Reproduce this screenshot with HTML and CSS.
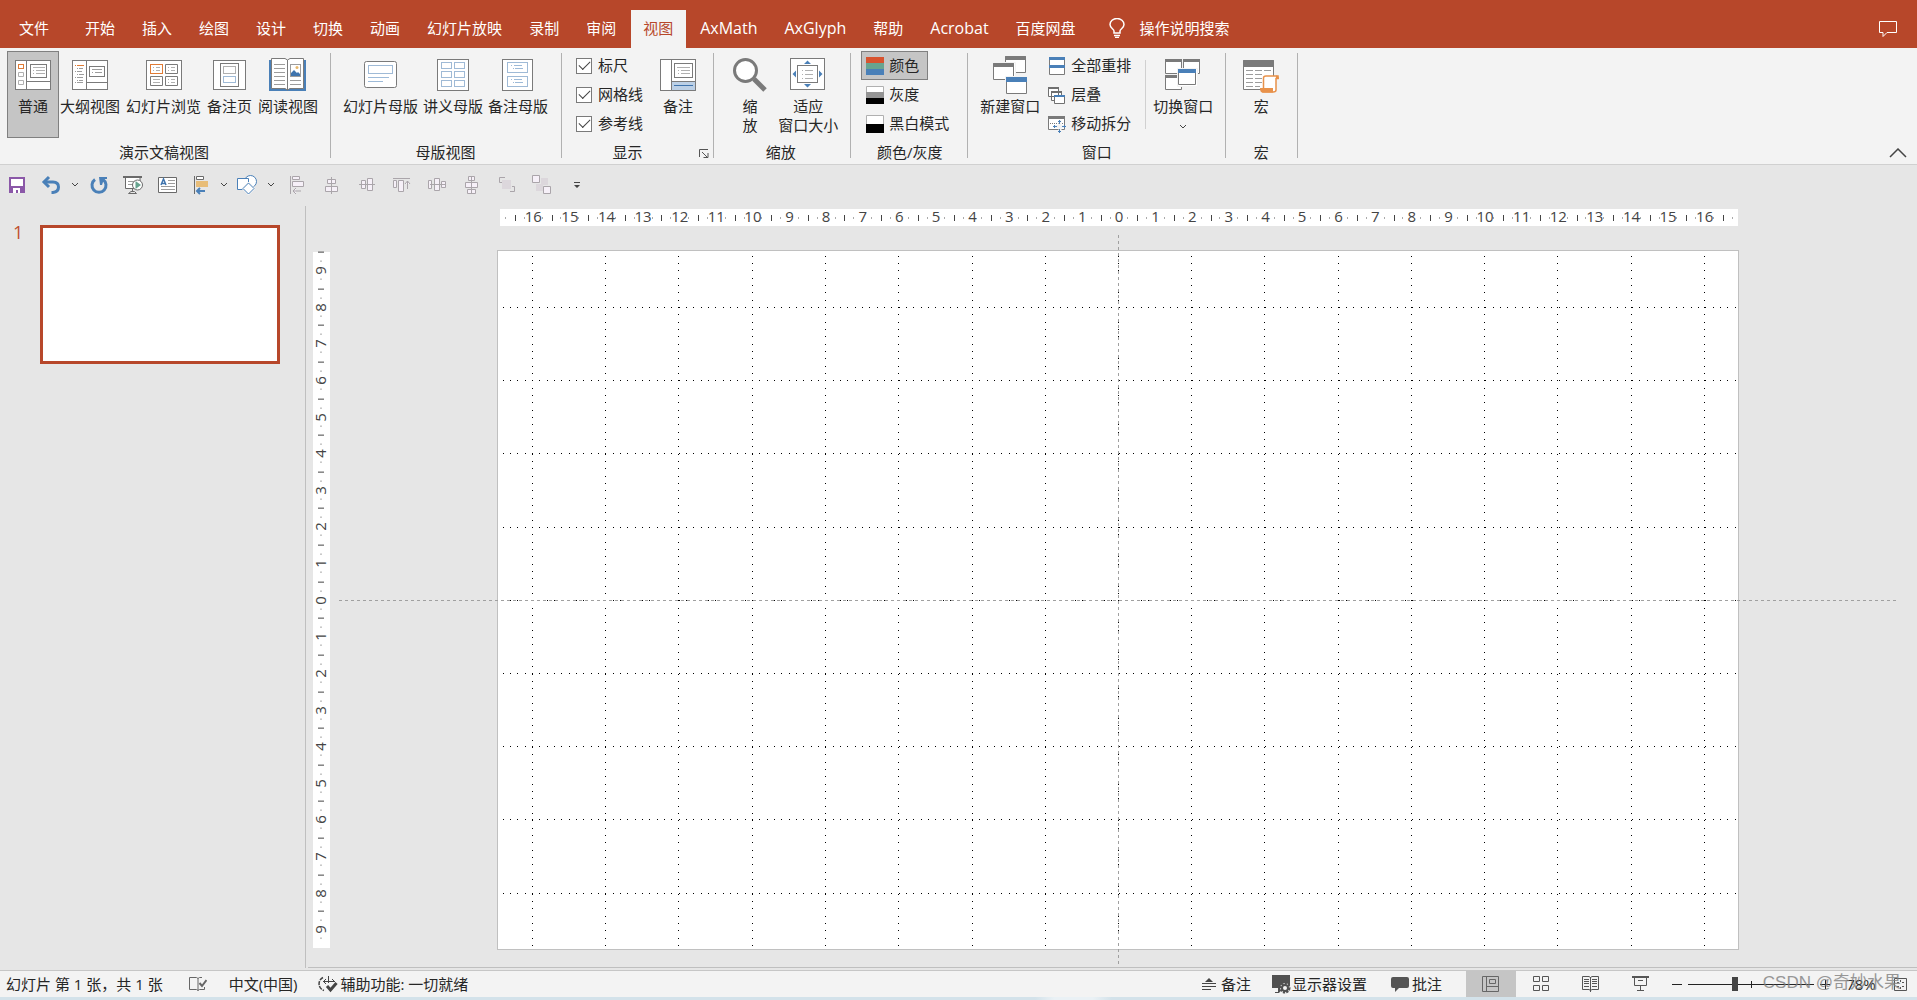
FILE: index.html
```html
<!DOCTYPE html>
<html lang="zh-CN">
<head>
<meta charset="utf-8">
<meta name="viewport" content="width=device-width, initial-scale=1">
<title>演示文稿</title>
<link rel="stylesheet" href="styles.css">
</head>
<body>
<header class="titlebar">
  <nav class="tabs" aria-label="功能区选项卡">
    <button class="tab tab-file">文件</button>
    <button class="tab">开始</button>
    <button class="tab">插入</button>
    <button class="tab">绘图</button>
    <button class="tab">设计</button>
    <button class="tab">切换</button>
    <button class="tab">动画</button>
    <button class="tab">幻灯片放映</button>
    <button class="tab">录制</button>
    <button class="tab">审阅</button>
    <button class="tab tab-active" aria-current="page">视图</button>
    <button class="tab tab-latin">AxMath</button>
    <button class="tab tab-latin">AxGlyph</button>
    <button class="tab">帮助</button>
    <button class="tab tab-latin">Acrobat</button>
    <button class="tab">百度网盘</button>
  </nav>
  <button class="tellme">
    <svg width="16" height="20" viewBox="0 0 16 20" fill="none" stroke="#fff" stroke-width="1.5"><path d="M5 15V13C5 11 1 10 1 6.500A7 6 0 0 1 15 6.500C15 10 11 11 11 13V15Z"/><path d="M5 17.500H11M6 19.500H10"/></svg>
    <span>操作说明搜索</span>
  </button>
  <button class="comments-btn" aria-label="批注">
    <svg width="18" height="18" viewBox="0 0 18 18" fill="none" stroke="#fff"><path d="M.5 1.500H17.500V12.500H8L4 16.500V12.500H.5Z"/></svg>
  </button>
</header>

<section class="ribbon" aria-label="视图">
  <div class="group group-views">
    <div class="group-body">
      <button class="big pressed">
        <svg width="36" height="42" viewBox="0 0 36 42" fill="#fff" stroke="#7a7a7a"><rect x=".5" y="6.500" width="35" height="29"/><path d="M11.500 6V36M11.500 27.500H36"/><rect x="15.500" y="10.500" width="16" height="13"/><rect x="3.500" y="10.500" width="5" height="4" stroke="#e07b35"/><path stroke="#b0b0b0" d="M3.500 18.500h5v4h-5zM3.500 26.500h5v4h-5zM18 13.500H30M18 16.500h1M21 16.500h9M18 19.500h1M21 19.500h9"/></svg>
        <span>普通</span>
      </button>
      <button class="big">
        <svg width="36" height="42" viewBox="0 0 36 42" fill="#fff" stroke="#7a7a7a"><rect x=".5" y="6.500" width="35" height="29"/><path d="M14.500 6V36M14.500 28.500H36"/><rect x="17.500" y="12.500" width="15" height="10"/><path stroke="#e07b35" d="M3 11.500h1M5 11.500h7"/><path stroke="#9c9c9c" d="M5 14.500h1M7 14.500h4M3 17.500h1M5 17.500h5M5 20.500h1M7 20.500h5M3 23.500h1M5 23.500h6M5 26.500h1M7 26.500h4M3 28.500h1M5 28.500h6M20 15.500h10M20 18.500h1M23 18.500h7"/></svg>
        <span>大纲视图</span>
      </button>
      <button class="big">
        <svg width="36" height="42" viewBox="0 0 36 42" fill="#fff" stroke="#7a7a7a"><rect x=".5" y="6.500" width="35" height="29"/><rect x="4.500" y="10.500" width="12" height="9" stroke="#e07b35"/><path d="M19.500 10.500h12v9h-12zM4.500 22.500h12v9h-12zM19.500 22.500h12v9h-12z"/><path stroke="#b0b0b0" d="M7 13.500h1M10 13.500h4M7 16.500h1M10 16.500h4M22 13.500h1M25 13.500h4M22 16.500h1M25 16.500h4M7 25.500h7M7 28.500h7M22 25.500h1M25 25.500h4M22 28.500h1M25 28.500h4"/></svg>
        <span>幻灯片浏览</span>
      </button>
      <button class="big">
        <svg width="36" height="42" viewBox="0 0 36 42" fill="#fff" stroke="#7a7a7a"><rect x="1.500" y="6.500" width="32" height="29"/><rect x="8.500" y="9.500" width="18" height="23"/><rect x="11.500" y="12.500" width="12" height="7" stroke="#b0b0b0"/><rect x="11.500" y="22.500" width="12" height="6" stroke="#3f74ad" stroke-dasharray="1 1"/></svg>
        <span>备注页</span>
      </button>
      <button class="big">
        <svg width="38" height="42" viewBox="0 0 38 42"><path fill="#4a80b8" d="M0 6H37V37H0Z"/><path fill="#fff" stroke="#7a7a7a" d="M2.500 4.500H16L18.500 6L21 4.500H34.500V34.500H21L18.500 36L16 34.500H2.500ZM18.500 6V36"/><path stroke="#9c9c9c" d="M5 10.500H16M5 14.500H16M5 18.500H16M5 22.500H16M5 26.500H16M5 30.500H16M21 26.500H32M21 30.500H32"/><rect x="21.500" y="10.500" width="10" height="12" fill="#fff" stroke="#9c9c9c"/><circle cx="28" cy="13.500" r="1.500" fill="#e8b86a"/><path fill="#3f74ad" d="M22 22V19L25 16L28 19L29 18L31 20V22Z"/></svg>
        <span>阅读视图</span>
      </button>
    </div>
    <div class="group-label">演示文稿视图</div>
  </div>

  <div class="group group-master">
    <div class="group-body">
      <button class="big">
        <svg width="36" height="42" viewBox="0 0 36 42" fill="#fff" stroke="#7a7a7a"><rect x="1.500" y="7.500" width="32" height="26" rx="2"/><rect x="5.500" y="11.500" width="24" height="8" stroke="#3f74ad" stroke-dasharray="1 1"/><path stroke="#9dbad8" d="M5 23.500H26M5 27.500H20"/></svg>
        <span>幻灯片母版</span>
      </button>
      <button class="big">
        <svg width="36" height="42" viewBox="0 0 36 42" fill="#fff" stroke="#7a7a7a"><rect x="2.500" y="5.500" width="31" height="31"/><path stroke="#3f74ad" stroke-dasharray="1 1" d="M6.500 8.500h10v6h-10zM19.500 8.500h10v6h-10zM6.500 17.500h10v6h-10zM19.500 17.500h10v6h-10zM6.500 26.500h10v6h-10zM19.500 26.500h10v6h-10z"/></svg>
        <span>讲义母版</span>
      </button>
      <button class="big">
        <svg width="36" height="42" viewBox="0 0 36 42" fill="#fff" stroke="#7a7a7a"><rect x="2.500" y="5.500" width="30" height="31"/><path stroke="#3f74ad" stroke-dasharray="1 1" d="M7.500 8.500h20v10h-20zM7.500 22.500h20v10h-20z"/><path stroke="#9dbad8" d="M11 11.500h1M14 11.500h8M13 14.500h1M15 14.500h8M11 25.500h1M14 25.500h8M13 28.500h1M15 28.500h8"/></svg>
        <span>备注母版</span>
      </button>
    </div>
    <div class="group-label">母版视图</div>
  </div>

  <div class="group group-show">
    <div class="group-body">
      <div class="stack">
        <label class="check"><input type="checkbox" checked>标尺</label>
        <label class="check"><input type="checkbox" checked>网格线</label>
        <label class="check"><input type="checkbox" checked>参考线</label>
      </div>
      <button class="big">
        <svg width="36" height="42" viewBox="0 0 36 42" fill="#fff" stroke="#7a7a7a"><rect x=".5" y="5.500" width="35" height="31"/><path fill="#bcd0e6" d="M11.500 27.500H35.500V36.500H11.500Z"/><path d="M11.500 5V36"/><rect x="14.500" y="9.500" width="18" height="14"/><path stroke="#3f74ad" d="M14 31.500H33"/><path stroke="#b0b0b0" d="M17 13.500H30M18 16.500h1M21 16.500h9M18 19.500h1M21 19.500h9"/></svg>
        <span>备注</span>
      </button>
    </div>
    <div class="group-label">显示
      <button class="launcher" aria-label="网格设置"><svg width="10" height="10" viewBox="0 0 10 10" fill="none" stroke="#555"><path d="M.5 8V.5H9M3 3L8.500 8.500M9 4V8.500H4.500"/></svg></button>
    </div>
  </div>

  <div class="group group-zoom">
    <div class="group-body">
      <button class="big">
        <svg width="34" height="42" viewBox="0 0 34 42"><circle cx="12.500" cy="16.500" r="11" fill="#fff" stroke="#7a7a7a" stroke-width="3"/><path d="M21 25L32 36" stroke="#7a7a7a" stroke-width="5"/></svg>
        <span>缩<br>放</span>
      </button>
      <button class="big">
        <svg width="36" height="42" viewBox="0 0 36 42" fill="#fff" stroke="#7a7a7a"><rect x=".5" y="4.500" width="34" height="31"/><rect x="7.500" y="11.500" width="20" height="17"/><path stroke="#b0b0b0" d="M12 16.500h1M15 16.500h8M12 20.500h1M15 20.500h8M12 24.500h1M15 24.500h8"/><path fill="#4a80b8" stroke="none" d="M14 10L17.500 6.500L21 10ZM14 30L17.500 33.500L21 30ZM6 16.500L2.500 20L6 23.500ZM29 16.500L32.500 20L29 23.500Z"/></svg>
        <span>适应<br>窗口大小</span>
      </button>
    </div>
    <div class="group-label">缩放</div>
  </div>

  <div class="group group-color">
    <div class="group-body">
      <div class="stack">
        <button class="small pressed"><svg width="18" height="18" viewBox="0 0 18 18"><path fill="#d8532f" d="M0 0h18v6H0z"/><path fill="#68a490" d="M0 6h18v6H0z"/><path fill="#4a80b8" d="M0 12h18v6H0z"/></svg>颜色</button>
        <button class="small"><svg width="18" height="18" viewBox="0 0 18 18"><path fill="#fff" stroke="#b0b0b0" d="M.5.5h17v17H.5z"/><path fill="#949494" d="M0 6h18v6H0z"/><path d="M0 12h18v6H0z"/></svg>灰度</button>
        <button class="small"><svg width="18" height="18" viewBox="0 0 18 18"><path fill="#fff" stroke="#b0b0b0" d="M.5.5h17v17H.5z"/><path d="M0 9h18v9H0z"/></svg>黑白模式</button>
      </div>
    </div>
    <div class="group-label">颜色/灰度</div>
  </div>

  <div class="group group-window">
    <div class="group-body">
      <button class="big">
        <svg width="36" height="42" viewBox="0 0 36 42" fill="#fff" stroke="#7a7a7a"><path d="M13.500 2.500h20v16h-20z"/><path fill="#7a7a7a" d="M13.500 2.500h20v3h-20z"/><path stroke="#f3f3f3" d="M.5 8.500h23v18H.5z"/><path d="M1.500 9.500h20v16h-20z"/><path fill="#7a7a7a" d="M1.500 9.500h20v3h-20z"/><path stroke="#f3f3f3" d="M13.500 22.500h22v18h-22z"/><path d="M14.500 23.500h20v16h-20z"/><path fill="#4a80b8" stroke="none" d="M14 23h21v5H14z"/></svg>
        <span>新建窗口</span>
      </button>
      <div class="stack">
        <button class="small"><svg width="18" height="20" viewBox="0 0 18 20" fill="#fff" stroke="#7a7a7a"><path d="M1.500 1.500h15v17h-15z"/><path fill="#4a80b8" stroke="none" d="M1 1h16v3H1zM1 9h16v3H1z"/></svg>全部重排</button>
        <button class="small"><svg width="18" height="18" viewBox="0 0 18 18" fill="#fff" stroke="#707070"><path d="M.5 1.500h10v9H.5zM3.500 5.500h10v9h-10z"/><path stroke-width="2" d="M0 2h11M3 6h11"/><path d="M6.500 9.500h10v8h-10z"/><path stroke="#4a80b8" stroke-width="2" d="M6 10h11"/></svg>层叠</button>
        <button class="small"><svg width="18" height="18" viewBox="0 0 18 18" fill="#fff" stroke="#7a7a7a"><path d="M.5 1.500h16v13H.5z"/><path stroke-width="3" d="M0 2.500h17"/><path stroke-dasharray="1 1" d="M2 8.500h14"/><path stroke="#f3f3f3" stroke-width="3" d="M12 5v13M6 11.500h12"/><path stroke="#4a80b8" d="M11.500 5v4M11.500 14v4M10 6.500h3M10 16.500h3M5 11.500h4M14 11.500h4M6.500 10v3M16.500 10v3"/></svg>移动拆分</button>
      </div>
      <div class="inner-rule"></div>
      <button class="big">
        <svg width="36" height="42" viewBox="0 0 36 42" fill="#fff" stroke="#7a7a7a"><path d="M.5 5.500h16v14H.5zM18.500 5.500h16v14h-16zM.5 21.500h16v14H.5z"/><path stroke-width="3" d="M0 6.500h17M18 6.500h17M0 22.500h17"/><path stroke="#f3f3f3" d="M12.500 14.500h20v18h-20z"/><path d="M13.500 15.500h17v15h-17z"/><path fill="#4a80b8" stroke="none" d="M13 15h18v4H13z"/></svg>
        <span>切换窗口</span>
        <svg class="drop" width="8" height="19" viewBox="0 0 8 19" fill="none" stroke="#444"><path d="M1 8L4 11L7 8"/></svg>
      </button>
    </div>
    <div class="group-label">窗口</div>
  </div>

  <div class="group group-macro">
    <div class="group-body">
      <button class="big">
        <svg width="36" height="42" viewBox="0 0 36 42" fill="#fff" stroke="#7a7a7a"><path d="M.5 6.500h30v29H.5z"/><path fill="#7a7a7a" d="M.5 6.500h30v6H.5z"/><path stroke="#9c9c9c" d="M3 16.500h7M12 16.500h7M21 16.500h7M3 20.500h7M12 20.500h7M3 24.500h7M12 24.500h7M3 28.500h7M12 28.500h7M3 32.500h7M12 32.500h5"/><path stroke="#e8914a" stroke-width="1.500" d="M20.500 35V24Q20.500 22 23 22H35V24.500H33V36Q33 38 30 38H20Z"/><path fill="#e8914a" stroke="none" d="M17 34H30V38.500H19Q17 38 17 34ZM33 21.500Q36 21.500 36 25H33Z"/></svg>
        <span>宏</span>
      </button>
    </div>
    <div class="group-label">宏</div>
  </div>
  <button class="collapse" aria-label="折叠功能区"><svg width="18" height="10" viewBox="0 0 18 10" fill="none" stroke="#444" stroke-width="1.500"><path d="M1 9L9 1L17 9"/></svg></button>
</section>

<div class="quickbar" role="toolbar" aria-label="快速访问工具栏">
  <button class="qa" aria-label="保存"><svg width="20" height="20" viewBox="0 0 20 20"><path fill="#8b58a8" d="M2 2H18V18H2Z"/><path fill="#fff" d="M4 4H16V11H4ZM6 13H13V18H11V15H9V18H6Z"/></svg></button>
  <button class="qa" aria-label="撤消"><svg width="20" height="20" viewBox="0 0 20 20" fill="none" stroke="#4a80b8" stroke-width="3"><path d="M3 7H12Q17.500 7 17.500 12T12 17.500H10.500"/><path d="M8 2L3 7L8 12"/></svg></button>
  <button class="qa-drop" aria-label="撤消选项"><svg width="8" height="6" viewBox="0 0 8 6" fill="none" stroke="#444"><path d="M1 1L4 4L7 1"/></svg></button>
  <button class="qa" aria-label="重复"><svg width="20" height="20" viewBox="0 0 20 20" fill="none" stroke="#4a80b8" stroke-width="3"><path d="M6 4.500A7 7 0 1 0 14 4.500"/><path fill="#4a80b8" stroke="none" d="M10 2H18V4H15L13 10H11Z"/></svg></button>
  <button class="qa" aria-label="从头开始"><svg width="20" height="20" viewBox="0 0 20 20" fill="none" stroke="#6a6a6a"><path stroke-width="2" d="M0 2H19"/><path fill="#fff" d="M2.500 3V13.500H17V3"/><path stroke="#9c9c9c" d="M5 6.500H12M5 9.500H10"/><path d="M9.500 14V17M5.500 18.500L8 16.500H11.500L13.500 18.500Z"/><circle cx="14.500" cy="10" r="5" fill="#fff"/><path fill="#68a490" stroke="none" d="M12.500 6V14L18 10Z"/></svg></button>
  <button class="qa" aria-label="文本框"><svg width="20" height="20" viewBox="0 0 20 20" fill="#fff" stroke="#6a6a6a"><path d="M1.500 2.500H19.500V17.500H1.500Z"/><path stroke="#9c9c9c" d="M11 5.500H18M11 8.500H18M4 11.500H18M4 14.500H18"/><path fill="none" stroke="#3f74ad" stroke-width="1.500" d="M4 10L6.500 4L9 10M5 8.500H8"/></svg></button>
  <button class="qa" aria-label="对齐"><svg width="20" height="20" viewBox="0 0 20 20" fill="#fff" stroke="#6a6a6a"><path d="M3.500 1V19M5.500 1.500h7v3h-7z"/><path fill="#e8bd78" stroke="none" d="M5 6H17V12H5Z"/><path fill="none" stroke="#4a80b8" stroke-width="2" d="M6 16H14M9 13L6 16L9 19"/></svg></button>
  <button class="qa-drop short" aria-label="对齐选项"><svg width="8" height="6" viewBox="0 0 8 6" fill="none" stroke="#444"><path d="M1 1L4 4L7 1"/></svg></button>
  <button class="qa" aria-label="形状"><svg width="22" height="20" viewBox="0 0 22 20" fill="#fff" stroke="#4a80b8"><circle cx="14.500" cy="6.500" r="6"/><path d="M1.500 3.500h11v11h-11z"/><path stroke="#f3f3f3" d="M12.500 7L19 13.500L12.500 20L6 13.500Z"/><path d="M12.500 8L18 13.500L12.500 19L7 13.500Z"/></svg></button>
  <button class="qa-drop" aria-label="形状选项"><svg width="8" height="6" viewBox="0 0 8 6" fill="none" stroke="#444"><path d="M1 1L4 4L7 1"/></svg></button>
  <div class="qa-disabled">
    <button class="qa" disabled aria-label="左对齐"><svg width="20" height="20" viewBox="0 0 20 20" fill="#f6f0f8" stroke="#aaa5aa"><path d="M3.500 1V19M5.500 1.500h7v3h-7zM5.500 6.500h11v5h-11zM6 16H14M9 13L6 16L9 19"/></svg></button>
    <button class="qa" disabled aria-label="水平居中"><svg width="20" height="20" viewBox="0 0 20 20" fill="#f6f0f8" stroke="#aaa5aa"><path d="M9.500 2V19M5.500 4.500h8v4h-8zM3.500 11.500h12v5h-12z"/></svg></button>
    <button class="qa" disabled aria-label="垂直居中"><svg width="20" height="20" viewBox="0 0 20 20" fill="#f6f0f8" stroke="#aaa5aa"><path d="M2 9.500H18M4.500 5.500h4v8h-4zM10.500 3.500h5v12h-5z"/></svg></button>
    <button class="qa" disabled aria-label="顶端对齐"><svg width="20" height="20" viewBox="0 0 20 20" fill="#f6f0f8" stroke="#aaa5aa"><path d="M1 3.500H18M1.500 5.500h3v7h-3zM6.500 5.500h5v11h-5zM15.500 14V6M13 9L15.500 6L18 9"/></svg></button>
    <button class="qa" disabled aria-label="横向分布"><svg width="20" height="20" viewBox="0 0 20 20" fill="#f6f0f8" stroke="#aaa5aa"><path d="M3 9.500H18M1.500 5.500h3v8h-3zM7.500 3.500h5v12h-5zM14.500 6.500h4v6h-4z"/></svg></button>
    <button class="qa" disabled aria-label="纵向分布"><svg width="20" height="20" viewBox="0 0 20 20" fill="#f6f0f8" stroke="#aaa5aa"><path d="M9.500 2V18M6.500 1.500h6v4h-6zM3.500 7.500h12v5h-12zM5.500 14.500h8v4h-8z"/></svg></button>
    <button class="qa" disabled aria-label="置于顶层"><svg width="20" height="20" viewBox="0 0 20 20" fill="none" stroke="#aaa5aa"><path d="M8 2.500H2.500V7.500H5M13 16.500H17.500V11.500H15"/><path fill="#dcd7dc" stroke="none" d="M5 5H14V14H5Z"/></svg></button>
    <button class="qa" disabled aria-label="组合"><svg width="20" height="20" viewBox="0 0 20 20" fill="#f6f0f8" stroke="#aaa5aa"><path fill="#dcd7dc" stroke="none" d="M9 3H16V10H9ZM4 9H11V16H4Z"/><path d="M.5.500h7v7h-7zM11.500 11.500h7v7h-7z"/></svg></button>
    <button class="qa" aria-label="自定义快速访问工具栏"><svg width="8" height="8" viewBox="0 0 8 8"><path fill="#444" d="M1 1H7V2H1ZM1 4H7L4 7Z"/></svg></button>
  </div>
</div>

<main class="workspace">
  <aside class="slides" aria-label="幻灯片缩略图">
    <span class="slide-no">1</span>
    <button class="thumb" aria-label="幻灯片 1"></button>
  </aside>
  <section class="stage">
    <div class="ruler ruler-h" aria-hidden="true"><i class="lead"></i><span>16</span><span>15</span><span>14</span><span>13</span><span>12</span><span>11</span><span>10</span><span>9</span><span>8</span><span>7</span><span>6</span><span>5</span><span>4</span><span>3</span><span>2</span><span>1</span><span>0</span><span>1</span><span>2</span><span>3</span><span>4</span><span>5</span><span>6</span><span>7</span><span>8</span><span>9</span><span>10</span><span>11</span><span>12</span><span>13</span><span>14</span><span>15</span><span>16</span><i class="trail"></i></div>
    <div class="ruler ruler-v" aria-hidden="true"><span>9</span><span>8</span><span>7</span><span>6</span><span>5</span><span>4</span><span>3</span><span>2</span><span>1</span><span>0</span><span>1</span><span>2</span><span>3</span><span>4</span><span>5</span><span>6</span><span>7</span><span>8</span><span>9</span></div>
    <div class="slide">
      <svg class="gridlines" viewBox="0 0 1240 698" preserveAspectRatio="none" fill="none" stroke="#000" stroke-dasharray="1 6 1 6 1 7" shape-rendering="crispEdges">
        <path d="M34.500 5V698M107.500 5V698M180.500 5V698M254.500 5V698M327.500 5V698M400.500 5V698M474.500 5V698M547.500 5V698M620.500 5V698M693.500 5V698M766.500 5V698M840.500 5V698M913.500 5V698M986.500 5V698M1059.500 5V698M1133.500 5V698M1206.500 5V698"/>
        <path d="M5 56.500H1240M5 129.500H1240M5 202.500H1240M5 276.500H1240M5 349.500H1240M5 422.500H1240M5 495.500H1240M5 568.500H1240M5 642.500H1240"/>
      </svg>
      <div class="guide guide-h"></div>
      <div class="guide guide-v"></div>
    </div>
  </section>
</main>

<footer class="status">
  <span>幻灯片 第 1 张，共 1 张</span>
  <button class="st st-proof" aria-label="拼写检查"><svg width="18" height="16" viewBox="0 0 18 16" fill="none" stroke="#666"><path d="M9 14.500V2.500L7.500 1.500H.5V13.500H7.500L9 14.500L10.500 13.500H15.500V11M9 2.500L10.500 1.500H13"/><path stroke-width="2" d="M10.500 7L13 10L17.500 4"/></svg></button>
  <button class="st st-lang">中文(中国)</button>
  <button class="st st-a11y"><svg width="20" height="18" viewBox="0 0 20 18" fill="none" stroke="#444"><path stroke-width="1.500" d="M5 2.500A7 7 0 0 0 6 15.500" stroke-dasharray="4 1"/><path d="M5 6.500H17M8 4L5.500 6.500L8 9M10.500 1V8M14 4L16.500 6.500"/><path stroke-width="3" d="M9 11L12.500 15L18.500 8"/></svg>辅助功能: 一切就绪</button>
  <div class="status-right">
    <button class="st st-notes"><svg width="14" height="14" viewBox="0 0 14 14" fill="#444"><path d="M3 5L7 1L11 5ZM0 6H14V7H0ZM0 9H14V10H0ZM0 12H9V13H0Z"/></svg>备注</button>
    <button class="st st-display"><svg width="20" height="20" viewBox="0 0 20 20"><path fill="#505050" d="M1 1H19V14H12L8 19H4V18H7V14H1Z"/><circle cx="14" cy="14" r="5" fill="#f3f3f3"/><circle cx="14" cy="14" r="4" fill="none" stroke="#505050" stroke-width="3" stroke-dasharray="2 1"/><circle cx="14" cy="14" r="3" fill="#f3f3f3" stroke="#505050" stroke-width="2"/></svg>显示器设置</button>
    <button class="st st-comment"><svg width="18" height="18" viewBox="0 0 18 18"><path fill="#555" d="M2 2H16Q18 2 18 4V11Q18 13 16 13H8L4 17V13H2Q0 13 0 11V4Q0 2 2 2Z"/></svg>批注</button>
    <button class="view view-on" aria-label="普通视图"><svg width="18" height="18" viewBox="0 0 18 18" fill="none" stroke="#666"><path d="M.5 1.500h16v15H.5zM4.500 1V16M4.500 11.500H17M7.500 4.500h6v4h-6z"/></svg></button>
    <button class="view" aria-label="幻灯片浏览"><svg width="18" height="18" viewBox="0 0 18 18" fill="none" stroke="#555"><path d="M1.500 1.500h6v5h-6zM10.500 1.500h6v5h-6zM1.500 10.500h6v5h-6zM10.500 10.500h6v5h-6z"/></svg></button>
    <button class="view" aria-label="阅读视图"><svg width="18" height="18" viewBox="0 0 18 18" fill="none" stroke="#555"><path d="M.5 1.500H7L8.500 2.500L10 1.500H16.500V14.500H10L8.500 15.500L7 14.500H.5ZM8.500 2V17M2 4.500h5M2 6.500h5M2 8.500h5M2 11.500h5M10 4.500h5M10 6.500h5M10 8.500h5M10 11.500h5"/></svg></button>
    <button class="view" aria-label="幻灯片放映"><svg width="18" height="18" viewBox="0 0 18 18" fill="none" stroke="#555"><path stroke-width="2" d="M0 2H17"/><path d="M2.500 2V10.500H14.500V2M6 5.500H11M8.500 11V15.500M5 15.500H12"/></svg></button>
    <button class="zoom-step" aria-label="缩小"><svg width="10" height="10" viewBox="0 0 10 10" stroke="#222"><path d="M0 5.500H10"/></svg></button>
    <input class="zoom-range" type="range" min="10" max="400" value="154" aria-label="缩放级别">
    <button class="zoom-step" aria-label="放大"><svg width="10" height="10" viewBox="0 0 10 10" stroke="#222"><path d="M0 5.500H10M5.500 1V10"/></svg></button>
    <button class="zoom-value">78%</button>
    <button class="fit" aria-label="适应窗口"><svg width="14" height="14" viewBox="0 0 14 14" fill="none" stroke="#555"><path d="M.5 1.500h12v12H.5zM5 5.500H3M8 5.500H10M5 9.500H3M8 9.500H10M6.500 5V3M6.500 10V12"/></svg></button>
  </div>
  <span class="watermark">CSDN @奇妙水果</span>
</footer>
<div class="taskbar-edge"></div>
</body>
</html>
```
FILE: styles.css
```css
* { box-sizing: border-box; }

body {
  margin: 0;
  height: 100vh;
  display: flex;
  flex-direction: column;
  overflow: hidden;
  background: #e6e6e6;
  color: #262626;
  font: 15px/19px "Open Sans", "Noto Sans CJK SC", sans-serif;
}

button {
  margin: 0;
  padding: 0;
  border: 0;
  background: none;
  color: inherit;
  font: inherit;
  white-space: nowrap;
}

svg { display: block; flex: none; }

/* Title bar */
.titlebar {
  flex: none;
  display: flex;
  align-items: flex-end;
  height: 48px;
  background: #b7472a;
  color: #fff;
}
.tabs { display: flex; gap: 2px; }
.tab { height: 38px; padding: 0 13px 2px 12px; }
.tab-latin { font-size: 16px; }
.tab-file { margin: 0 9px 0 7px; }
.tab-active { background: #f3f3f3; color: #b7472a; }
.tellme {
  display: flex;
  align-items: center;
  gap: 15px;
  height: 38px;
  margin-left: 20px;
  padding-bottom: 2px;
}
.comments-btn { height: 38px; margin: 0 20px 0 auto; }

/* Ribbon */
.ribbon {
  flex: none;
  display: flex;
  height: 117px;
  padding-top: 3px;
  background: #f3f3f3;
  border-bottom: 1px solid #d0d0d0;
}
.group {
  display: flex;
  flex-direction: column;
  background: linear-gradient(#b1b1b1, #b1b1b1) right 2px / 1px 105px no-repeat;
}
.group-views { padding: 0 10px 0 7px; }
.group-master { padding: 0 12px 0 10px; }
.group-show { padding: 0 15px 0 14px; }
.group-zoom { padding: 0 10px 0 16px; }
.group-color { padding: 0 10px; }
.group-window { padding: 0 10px 0 9px; }
.group-macro { padding: 0 16px 0 14px; }
.group-body { display: flex; height: 87px; }
.group-label { position: relative; padding-top: 5px; text-align: center; }
.group-show .group-label { padding-right: 20px; }
.group-zoom .group-label { padding-right: 10px; }
.group-show .big { margin-left: 14px; }
.group-zoom .group-body { gap: 5px; }
.launcher { position: absolute; right: -10px; bottom: 3px; }

.big {
  display: flex;
  flex-direction: column;
  align-items: center;
  gap: 1px;
  padding: 2px;
  border: 1px solid transparent;
}
.big.pressed { width: 52px; margin-right: -2px; }
.group-master .big { padding: 2px 1px; }
.pressed { background: #c5c5c5; border-color: #808080; }
.group-master .group-body { gap: 1px; }
.stack { display: grid; grid-template-rows: repeat(3, 29px); justify-items: start; }
.small {
  display: flex;
  align-items: center;
  gap: 5px;
  padding: 0 8px 0 4px;
  border: 1px solid transparent;
}
.small.pressed { border-color: #808080; }
.check { display: flex; align-items: center; gap: 6px; }
.check input {
  appearance: none;
  width: 16px;
  height: 16px;
  margin: 0;
  border: 1px solid #7a7a7a;
  background: #fff;
  display: grid;
  place-items: center;
}
.check input:checked::before {
  content: "";
  width: 10px;
  height: 5px;
  margin-bottom: 3px;
  border: solid #444;
  border-width: 0 0 1px 1px;
  rotate: -45deg;
}
.inner-rule { width: 1px; height: 69px; margin: 9px 4px 0 5px; background: #d0d0d0; }
.collapse { align-self: flex-end; margin: 0 10px 6px auto; }

/* Quick access toolbar */
.quickbar { flex: none; display: flex; align-items: center; height: 41px; padding-bottom: 2px; }
.qa, .qa-drop { display: grid; place-items: center; height: 30px; }
.qa { width: 34px; }
.qa-drop { width: 14px; }
.qa-drop.short { width: 12px; }
.qa-disabled { display: flex; margin-left: 1px; }
.qa-disabled .qa { width: 35px; }

/* Workspace */
.workspace { flex: 1; min-height: 0; display: flex; }
.slides {
  flex: none;
  display: flex;
  align-items: flex-start;
  width: 306px;
  margin-bottom: 2px;
  padding: 19px 0 0 13px;
  border-right: 1px solid #bfbfbf;
}
.slide-no { width: 27px; color: #c0502f; font-size: 18px; line-height: 15px; }
.thumb { width: 240px; height: 139px; border: 3px solid #b7472a; background: #fff; }

.stage {
  flex: 1;
  min-width: 0;
  display: grid;
  grid-template: 17px minmax(0, 1fr) / 17px minmax(0, 1fr);
  gap: 24px 167px;
  margin: 0 0 2px 2px;
  padding: 3px 178px 17px 5px;
  border-bottom: 1px solid #bfbfbf;
}
.ruler {
  display: grid;
  background: #fff;
  color: #444;
  line-height: 15px;
  text-align: center;
}
.ruler-h {
  grid-column: 2;
  grid-template-columns: 15px repeat(33, minmax(0, 1fr)) 15px;
  margin-left: 3px;
  margin-right: 1px;
}
.ruler-h span {
  background:
    linear-gradient(#444, #444) left center / 1px 6px no-repeat,
    linear-gradient(#aaa, #aaa) 25% center / 1px 2px no-repeat,
    linear-gradient(#aaa, #aaa) 75% center / 1px 2px no-repeat;
}
.lead { background: linear-gradient(#aaa, #aaa) 35% center / 1px 2px no-repeat; }
.trail {
  background:
    linear-gradient(#444, #444) left center / 1px 6px no-repeat,
    linear-gradient(#aaa, #aaa) 65% center / 1px 2px no-repeat;
}
.ruler-v {
  grid-template-rows: repeat(19, minmax(0, 1fr));
  margin: 2px 0;
}
.ruler-v span {
  writing-mode: vertical-rl;
  rotate: 180deg;
  background:
    linear-gradient(#444, #444) center bottom / 6px 1px no-repeat,
    linear-gradient(#aaa, #aaa) center 25% / 2px 1px no-repeat,
    linear-gradient(#aaa, #aaa) center 75% / 2px 1px no-repeat;
}
.slide { position: relative; background: #fff; border: 1px solid #c0c0c0; }
.gridlines { width: 100%; height: 100%; }
.guide { position: absolute; }
.guide-h {
  left: -159px;
  right: -158px;
  top: 50%;
  height: 1px;
  background: repeating-linear-gradient(90deg, #a0a0a0 0 3px, transparent 3px 6px);
}
.guide-v {
  top: -16px;
  bottom: -16px;
  left: 50%;
  width: 1px;
  background: repeating-linear-gradient(#a0a0a0 0 3px, transparent 3px 6px);
}

/* Status bar */
.status {
  position: relative;
  flex: none;
  display: flex;
  align-items: center;
  height: 27px;
  padding-left: 6px;
  background: #f3f3f3;
  border-top: 1px solid #c6c6c6;
  white-space: nowrap;
}
.st { display: flex; align-items: center; }
.st-proof { margin-left: 26px; }
.st-lang { margin-left: 22px; }
.st-a11y { gap: 3px; margin-left: 20px; }
.status-right { display: flex; align-items: center; align-self: stretch; margin-left: auto; }
.st-notes { gap: 5px; }
.st-display { gap: 1px; margin-left: 20px; }
.st-comment { gap: 3px; margin: 0 24px; }
.view { display: grid; place-items: center; width: 50px; height: 26px; }
.view-on { background: #c5c5c5; }
.zoom-step { display: grid; place-items: center; width: 18px; margin: 0 2px; }
.zoom-range {
  appearance: none;
  width: 126px;
  height: 16px;
  margin: 0;
  background:
    linear-gradient(#222, #222) center / 1px 7px no-repeat,
    linear-gradient(#222, #222) center / 100% 1px no-repeat;
}
.zoom-range::-webkit-slider-thumb { appearance: none; width: 6px; height: 14px; background: #444; }
.zoom-value { width: 32px; margin-left: 9px; }
.fit { margin: 0 9px 0 17px; }
.watermark {
  position: absolute;
  right: 16px;
  top: 1px;
  color: #808080;
  opacity: 0.8;
  font: 17px/22px "Liberation Sans", "Noto Sans CJK SC", sans-serif;
  pointer-events: none;
}
.taskbar-edge {
  flex: none;
  height: 3px;
  background: linear-gradient(90deg, #d3e2ea 54%, #eaf1f5 55% 57%, #d3e2ea 58%);
}
```
